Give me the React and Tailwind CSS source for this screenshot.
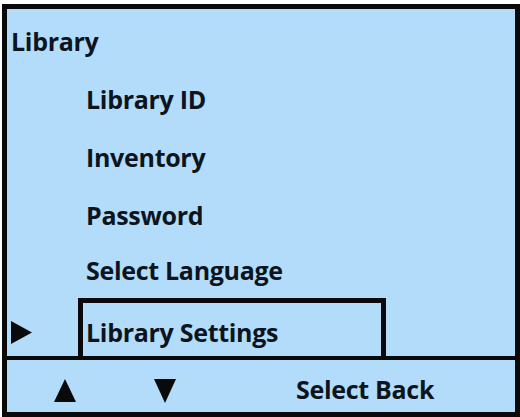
import React from "react";

const font = { fontFamily: '"Open Sans", "Noto Sans", sans-serif' };

function Item({ children, h }) {
  return (
    <div className={`flex items-center pl-[79px] ${h}`}>
      <span className="text-[25px] font-bold leading-none text-[#0c141d] tracking-[-0.3px]">{children}</span>
    </div>
  );
}

export default function App() {
  return (
    <div className="w-[520px] h-[417px] bg-white pt-[4px] pl-[2px]" style={font}>
      <div className="w-[518px] h-[413px] border-[5px] border-[#0a0a0a] bg-[#b3dcfa] flex flex-col">
        <div className="flex-1 flex flex-col pt-[3px]">
          <div className="flex items-center pl-[4px] h-[58px]">
            <span className="text-[25px] font-bold leading-none text-[#0c141d] tracking-[-0.3px]">Library</span>
          </div>
          <Item h="h-[58px]">Library ID</Item>
          <Item h="h-[58px]">Inventory</Item>
          <Item h="h-[58px]">Password</Item>
          <Item h="h-[52px]">Select Language</Item>
          <div className="mt-auto flex h-[58px]">
            <div className="w-[71px] pl-[4px] pt-[11px] flex items-center">
              <svg width="21" height="23" viewBox="0 0 21 23">
                <polygon points="0,0 21,11.5 0,23" fill="#0a0a0a" />
              </svg>
            </div>
            <div className="w-[308px] border-[5px] border-b-0 border-[#0a0a0a] flex items-center pl-[3px] pt-[6px]">
              <span className="text-[25px] font-bold leading-none text-[#0c141d] tracking-[-0.3px]">Library Settings</span>
            </div>
          </div>
        </div>
        <div className="h-[56px] border-t-[4px] border-[#0a0a0a] flex items-center pt-[7px] pl-[47px]">
          <svg width="22" height="23" viewBox="0 0 22 23" className="mt-[1px]">
            <polygon points="11,0 22,23 0,23" fill="#0a0a0a" />
          </svg>
          <svg width="22" height="24" viewBox="0 0 22 24" className="ml-[78px] mt-[3px]">
            <polygon points="0,0 22,0 11,24" fill="#0a0a0a" />
          </svg>
          <span className="ml-[120px] text-[25px] font-bold leading-none text-[#0c141d] tracking-[-0.3px]">Select Back</span>
        </div>
      </div>
    </div>
  );
}
